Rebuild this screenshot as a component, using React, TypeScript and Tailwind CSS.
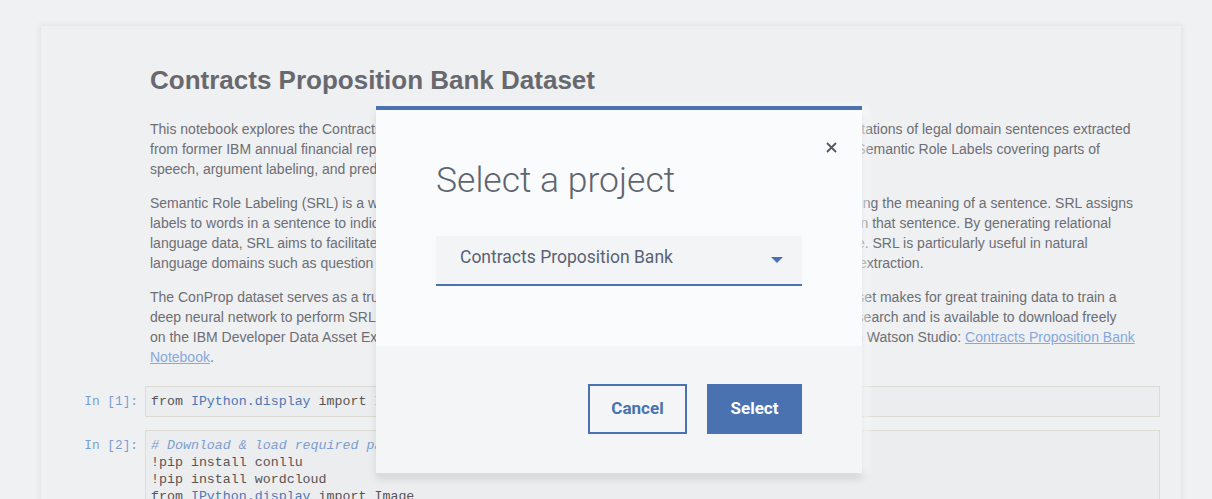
import React from 'react';

const sans = { fontFamily: '"Liberation Sans", Arial, sans-serif' };

const para1 = [
  'This notebook explores the Contracts Proposition Bank (ConProp) dataset, which contains thorough linguistic annotations of legal domain sentences extracted',
  'from former IBM annual financial reports. This dataset contains a total of 1,864 English sentences, annotated with Semantic Role Labels covering parts of',
  'speech, argument labeling, and predicate sense disambiguation.',
];

const para2 = [
  'Semantic Role Labeling (SRL) is a well-known process in natural language processing (NLP) that aims at determining the meaning of a sentence. SRL assigns',
  'labels to words in a sentence to indicate their specific semantic roles, i.e. who did what to whom, when and where in that sentence. By generating relational',
  'language data, SRL aims to facilitate a much better understanding of the underlying meaning of any given sentence. SRL is particularly useful in natural',
  'language domains such as question answering, dialogue systems, machine translation, and automatic information extraction.',
];

const para3 = [
  'The ConProp dataset serves as a truly excellent resource for training SRL models on legal domain texts. This dataset makes for great training data to train a',
  'deep neural network to perform SRL on legal domain sentences. The dataset was publicly released by the IBM Research and is available to download freely',
];

const Lines: React.FC<{ lines: string[] }> = ({ lines }) => (
  <p className="whitespace-nowrap">
    {lines.map((l) => (
      <span key={l} className="block">{l}</span>
    ))}
  </p>
);

const Prompt: React.FC<{ n: number }> = ({ n }) => (
  <div className="w-[97px] shrink-0 pt-[7px] text-right text-[12.8px] leading-[17px] text-[#7d9ed2]">
    In [{n}]:
  </div>
);

export default function App() {
  return (
    <div className="relative h-[499px] w-[1212px] overflow-hidden bg-[#f0f1f2]" style={sans}>
      {/* Notebook page */}
      <div className="ml-[41px] mt-[26px] w-[1140px] bg-[#eff0f2] pb-10 shadow-[0_0_5px_2px_rgba(0,0,0,0.05)]">
        <div className="pl-[109px] pt-[38px] text-[14px] leading-[20px] text-[#6d6e74]">
          <h1 className="text-[26px] font-bold leading-[32px] text-[#68696e]">
            Contracts Proposition Bank Dataset
          </h1>
          <div className="mt-[23px] flex flex-col gap-[14px]">
            <Lines lines={para1} />
            <Lines lines={para2} />
            <p className="whitespace-nowrap">
              {para3.map((l) => (
                <span key={l} className="block">{l}</span>
              ))}
              <span className="block">
                on the IBM Developer Data Asset Exchange (DAX) site. A copy of this notebook can also be easily found and run in Watson Studio:{' '}
                <a href="#" className="text-[#86a8da] underline">Contracts Proposition Bank</a>
              </span>
              <span className="block">
                <a href="#" className="text-[#86a8da] underline">Notebook</a>.
              </span>
            </p>
          </div>
        </div>

        <div className="mt-[19px] flex flex-col gap-[13px] pr-[21px]" style={{ fontFamily: '"Liberation Mono", "Courier New", monospace' }}>
          <div className="flex items-start gap-[7px]">
            <Prompt n={1} />
            <div className="flex-1 border border-[#dddbd6] bg-[#ebedee] px-[5px] py-[6px] text-[13.3px] leading-[17px] text-[#5a5454]">
              from <span className="text-[#4d78b6]">IPython.display</span> import Image
            </div>
          </div>
          <div className="flex items-start gap-[7px]">
            <Prompt n={2} />
            <div className="flex-1 border border-[#dddbd6] bg-[#ebedee] px-[5px] py-[6px] text-[13.3px] leading-[17px] text-[#5a5454]">
              <div className="italic text-[#7d9ed2]"># Download &amp; load required packages</div>
              <div>!pip install conllu</div>
              <div>!pip install wordcloud</div>
              <div>from <span className="text-[#4d78b6]">IPython.display</span> import Image</div>
              <div>import pandas as pd</div>
            </div>
          </div>
        </div>
      </div>

      {/* Modal */}
      <div
        className="absolute left-[376px] top-[106px] w-[486px] border-t-4 border-[#4a72b0] bg-[#fafbfc] shadow-[0_6px_8px_rgba(0,0,0,0.1),6px_0_6px_rgba(255,255,255,0.6)]"
        style={{ fontFamily: 'Roboto, "Noto Sans", sans-serif' }}
      >
        <button className="absolute right-[21px] top-[27px] flex h-[20px] w-[20px] items-center justify-center text-[#55585e]">
          <svg width="11" height="11" viewBox="0 0 11 11" fill="none" stroke="currentColor" strokeWidth="1.8">
            <path d="M1 1l9 9M10 1l-9 9" />
          </svg>
        </button>
        <div className="px-[60px] pb-[60px] pt-[48px]">
          <h2 className="text-[35.5px] font-light leading-[44px] text-[#5f6570]">Select a project</h2>
          <div className="mt-[34px] flex h-[50px] items-center justify-between border-b-2 border-[#4a72b0] bg-[#f3f4f6] pb-[6px] pl-[24px] pr-[19px]">
            <span className="text-[17.5px] leading-[24px] text-[#5a6273]">Contracts Proposition Bank</span>
            <svg className="mt-[6px]" width="12" height="6" viewBox="0 0 12 6">
              <path d="M0 0h12L6 6z" fill="#4a72b0" />
            </svg>
          </div>
        </div>
        <div className="flex justify-end gap-[20px] bg-[#f4f5f6] pb-[39px] pr-[60px] pt-[38px]">
          <button className="h-[50px] w-[99px] border-2 border-[#4a72b0] text-[17px] font-bold text-[#4a72b0]">
            Cancel
          </button>
          <button className="h-[50px] w-[95px] bg-[#4a72b0] text-[17px] font-bold text-white">
            Select
          </button>
        </div>
      </div>
    </div>
  );
}
